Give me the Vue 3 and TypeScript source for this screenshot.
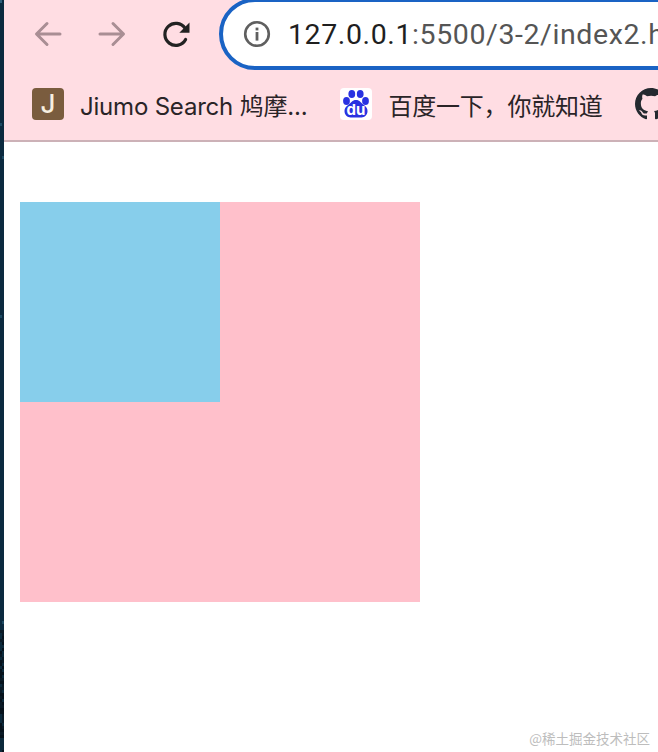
<script setup lang="ts">
const bookmarks = [
  { name: 'Jiumo Search 鸠摩...', icon: 'jiumo' },
  { name: '百度一下，你就知道', icon: 'baidu' },
  { name: '', icon: 'github' }
]

// the bit of desktop wallpaper that shows beside the window
const upper = ['#0b2a3f', '#1d4a63', '#7d97b2', '#0a1c2c', '#2f5f7a', '#0d2333', '#a3afcb', '#123a50']
const lower = ['#06121c', '#04101a', '#0a1a26', '#06121c', '#0c2a3c', '#051019']
const noise: { x: number; y: number; fill: string }[] = []
let seed = 7
for (let y = 0; y < 752; y += 3) {
  for (let x = 0; x < 4; x += 2) {
    seed = (seed * 1103515245 + 12345) % 2147483648
    const colors = y < 630 ? upper : lower
    noise.push({ x, y, fill: colors[seed % 65536 % colors.length] })
  }
}
</script>

<template>
  <div class="page">
    <svg class="desktop-edge" width="4" height="752">
      <rect v-for="n in noise" :key="n.x + '-' + n.y" :x="n.x" :y="n.y" width="2" height="3" :fill="n.fill" />
    </svg>
    <div class="window">
      <header class="chrome">
        <div class="toolbar">
          <button class="nav-btn" aria-label="back">
            <svg viewBox="0 0 32 32" width="32" height="32" fill="none" stroke="#a98e94" stroke-width="3" stroke-linecap="round" stroke-linejoin="round">
              <path d="M28 16H5M15 5.5 4.5 16 15 26.5" />
            </svg>
          </button>
          <button class="nav-btn" aria-label="forward">
            <svg viewBox="0 0 32 32" width="32" height="32" fill="none" stroke="#a98e94" stroke-width="3" stroke-linecap="round" stroke-linejoin="round">
              <path d="M4 16h23M17 5.5 27.5 16 17 26.5" />
            </svg>
          </button>
          <button class="nav-btn" aria-label="reload">
            <svg viewBox="0 0 32 32" width="32" height="32" fill="none">
              <path d="M25.6 21.5a11 11 0 1 1-.6-11.3" stroke="#222" stroke-width="3.2" stroke-linecap="round" />
              <path d="M29.5 4.5v10.2H19.3z" fill="#222" />
            </svg>
          </button>
          <div class="omnibox">
            <svg class="info" viewBox="0 0 28 28" width="28" height="28" fill="none">
              <circle cx="14" cy="14" r="11.8" stroke="#5f5f5f" stroke-width="2.6" />
              <rect x="12.6" y="12" width="2.8" height="8.6" fill="#5f5f5f" />
              <rect x="12.6" y="7.6" width="2.8" height="2.8" fill="#5f5f5f" />
            </svg>
            <span class="url"><span class="host">127.0.0.1</span>:5500/3-2/index2.html</span>
          </div>
        </div>
        <nav class="bookmarks">
          <a v-for="b in bookmarks" :key="b.icon" class="bookmark">
            <span v-if="b.icon === 'jiumo'" class="favicon jiumo">J</span>
            <span v-else-if="b.icon === 'baidu'" class="favicon baidu">
              <svg viewBox="0 0 32 32" width="32" height="32">
                <ellipse cx="6.5" cy="13" rx="3.4" ry="3.9" fill="#2932e1" />
                <ellipse cx="11.8" cy="6" rx="3.4" ry="4.1" fill="#2932e1" />
                <ellipse cx="20.2" cy="6" rx="3.4" ry="4.1" fill="#2932e1" />
                <ellipse cx="25.5" cy="13" rx="3.4" ry="3.9" fill="#2932e1" />
                <path d="M16 12c3.8 0 5 2.8 7.6 4.8 2.8 2.2 3.9 4 3.9 6.2 0 4-3 6.4-6 6.4H10.500c-3 0-6-2.400-6-6.400 0-2.200 1.100-4 3.900-6.200C11 14.800 12.200 12 16 12z" fill="#2932e1" />
                <text x="16" y="26.500" text-anchor="middle" class="du">du</text>
              </svg>
            </span>
            <svg v-else class="favicon" viewBox="0 0 16 16" width="32" height="32">
              <path fill="#24292f" d="M8 0C3.58 0 0 3.58 0 8c0 3.54 2.29 6.53 5.47 7.59.4.07.55-.17.55-.38 0-.19-.01-.82-.01-1.49-2.01.37-2.53-.49-2.69-.94-.09-.23-.48-.94-.82-1.13-.28-.15-.68-.52-.01-.53.63-.01 1.08.58 1.23.82.72 1.21 1.87.87 2.33.66.07-.52.28-.87.51-1.07-1.78-.2-3.64-.89-3.64-3.95 0-.87.31-1.59.82-2.15-.08-.2-.36-1.02.08-2.12 0 0 .67-.21 2.2.82.64-.18 1.32-.27 2-.27s1.36.09 2 .27c1.53-1.04 2.2-.82 2.2-.82.44 1.1.16 1.92.08 2.12.51.56.82 1.27.82 2.15 0 3.07-1.87 3.75-3.65 3.95.29.25.54.73.54 1.48 0 1.07-.01 1.93-.01 2.2 0 .21.15.46.55.38A8.01 8.01 0 0 0 16 8c0-4.42-3.58-8-8-8z" />
            </svg>
            <span v-if="b.name" class="bookmark-name">{{ b.name }}</span>
          </a>
        </nav>
      </header>
      <main class="content">
        <div class="parent">
          <div class="child"></div>
        </div>
      </main>
    </div>
    <span class="watermark">@稀土掘金技术社区</span>
  </div>
</template>

<style>
html, body {
  margin: 0;
  background: #fff;
}
</style>

<style scoped>
.page {
  position: relative;
  display: flex;
  width: 658px;
  height: 752px;
  overflow: hidden;
  background: #fff;
  font-family: Inter, "Noto Sans CJK SC", sans-serif;
}

.desktop-edge {
  flex: none;
  display: block;
}

.window {
  flex: 1;
  min-width: 0;
  display: flex;
  flex-direction: column;
}

.chrome {
  flex: none;
  background: #ffdde3;
  border-bottom: 2px solid #ccb1b7;
  overflow: hidden;
}

.toolbar {
  display: flex;
  align-items: flex-start;
  height: 70px;
  padding-left: 28px;
}

.nav-btn {
  flex: none;
  width: 32px;
  height: 32px;
  margin: 18px 32px 0 0;
  padding: 0;
  border: 0;
  background: none;
}

.nav-btn:nth-child(3) {
  margin-right: 27px;
}

.omnibox {
  flex: none;
  box-sizing: border-box;
  display: flex;
  align-items: center;
  width: 600px;
  height: 72px;
  margin-top: -2px;
  padding-left: 20px;
  background: #fff;
  border: 4px solid #1a63c4;
  border-radius: 36px;
}

.info {
  flex: none;
  margin-right: 17px;
}

.url {
  font-family: Roboto, sans-serif;
  font-size: 28.5px;
  letter-spacing: .6px;
  color: #555;
  white-space: nowrap;
}

.host {
  color: #1f1f1f;
}

.bookmarks {
  box-sizing: border-box;
  display: flex;
  align-items: center;
  height: 70px;
  padding: 0 0 2px 28px;
}

.bookmark {
  flex: none;
  display: flex;
  align-items: center;
  gap: 16px;
  margin-right: 32px;
}

.bookmark:first-child {
  margin-right: 33px;
}

.favicon {
  flex: none;
  display: block;
  width: 32px;
  height: 32px;
  border-radius: 4px;
}

.jiumo {
  background: #7a5c3e;
  color: #f7efe0;
  font-size: 26px;
  font-weight: 500;
  line-height: 32px;
  text-align: center;
}

.baidu {
  background: #fff;
}

.du {
  fill: #fff;
  font-size: 15px;
  font-weight: 700;
  font-family: Inter, sans-serif;
}

.bookmark-name {
  font-size: 24px;
  letter-spacing: -.2px;
  color: #2a2427;
  white-space: nowrap;
}

.content {
  flex: 1;
  padding: 60px 0 0 16px;
}

.parent {
  width: 400px;
  height: 400px;
  background: #ffc0cb;
}

.child {
  width: 200px;
  height: 200px;
  background: #87ceeb;
}

.watermark {
  position: absolute;
  right: 8px;
  bottom: 6px;
  font-size: 13.5px;
  line-height: 16px;
  color: #bdbdbd;
  font-family: "Noto Sans CJK SC", sans-serif;
}
</style>
